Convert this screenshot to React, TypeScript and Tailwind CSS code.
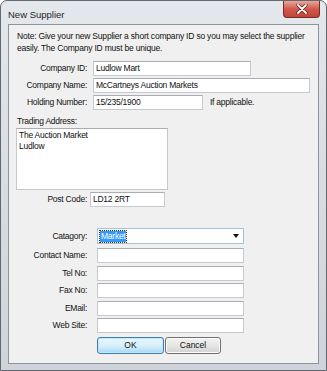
import React from 'react';

const font = "font-['Liberation_Sans',Arial,sans-serif]";

// Windows 7 style text box
const TextBox = ({ value, className }: { value?: string; className: string }) => (
  <div
    className={`h-[15px] bg-white border border-[#c5cad1] border-t-[#abadb3] flex items-center pl-[2px] text-[8.5px] tracking-[-0.25px] text-[#111] ${className}`}
  >
    {value}
  </div>
);

const Label = ({ text, className }: { text: string; className: string }) => (
  <div className={`text-right text-[8.5px] tracking-[-0.25px] text-[#111] leading-[15px] ${className}`}>{text}</div>
);

const App = () => {
  const contactFields = ['Contact Name:', 'Tel No:', 'Fax No:', 'EMail:', 'Web Site:'];

  return (
    <div className={`w-[327px] h-[371px] bg-white ${font}`}>
      <div className="w-[327px] h-[371px] rounded-t-[7px] border border-[#626870] bg-gradient-to-b from-[#e4e8ec] via-[#d9dde2] to-[#cfd4da] flex flex-col px-[7px] pb-[6px]">
        {/* Title bar */}
        <div className="h-[23px] flex items-start justify-between">
          <div className="text-[9.5px] text-[#1e1e1e] pt-[7px]">New Supplier</div>
          <div className="mr-[-1px] w-[37px] h-[17px] rounded-b-[4px] border border-t-0 border-[#7a2b25] bg-gradient-to-b from-[#e6a69a] via-[#cf5a4c] to-[#c2443a] flex items-center justify-center">
            <svg width="12" height="10" viewBox="0 0 12 10">
              <path d="M2 1 L10 9 M10 1 L2 9" stroke="#5a1a14" strokeWidth="3.2" strokeLinecap="round" />
              <path d="M2 1 L10 9 M10 1 L2 9" stroke="#ffffff" strokeWidth="1.8" strokeLinecap="round" />
            </svg>
          </div>
        </div>

        {/* Client area */}
        <div className="flex-1 bg-[#f0f0f0] border border-[#8e949c] flex flex-col">
          <div className="pl-[8px] pt-[5px] text-[8.5px] tracking-[-0.2px] leading-[12px] text-[#111]">
            <div>Note: Give your new Supplier a short company ID so you may select the supplier</div>
            <div>easily. The Company ID must be unique.</div>
          </div>

          <div className="mt-[7px] flex flex-col gap-[2px]">
            <div className="flex">
              <Label text="Company ID:" className="w-[78px]" />
              <TextBox value="Ludlow Mart" className="ml-[6px] w-[158px]" />
            </div>
            <div className="flex">
              <Label text="Company Name:" className="w-[78px]" />
              <TextBox value="McCartneys Auction Markets" className="ml-[6px] w-[217px]" />
            </div>
            <div className="flex items-center">
              <Label text="Holding Number:" className="w-[78px]" />
              <TextBox value="15/235/1900" className="ml-[6px] w-[110px]" />
              <div className="ml-[7px] text-[8.5px] tracking-[-0.25px] text-[#111]">If applicable.</div>
            </div>
          </div>

          <div className="mt-[5px] pl-[8px] text-[8.5px] tracking-[-0.25px] leading-[12px] text-[#111]">Trading Address:</div>
          <div className="ml-[7px] mt-[1px] w-[152px] h-[62px] bg-white border border-[#c5cad1] border-t-[#abadb3] pl-[2px] pt-[1px] text-[8.5px] tracking-[-0.25px] leading-[11px] text-[#111]">
            <div>The Auction Market</div>
            <div>Ludlow</div>
          </div>
          <div className="mt-[2px] flex">
            <Label text="Post Code:" className="w-[78px]" />
            <TextBox value="LD12 2RT" className="ml-[3px] w-[75px]" />
          </div>

          <div className="mt-[21px] flex">
            <Label text="Catagory:" className="w-[78px] leading-[16px]" />
            <div className="ml-[10px] w-[147px] h-[16px] bg-white border border-[#a6c3d8] flex items-center justify-between pl-[2px] pr-[4px]">
              <span className="bg-[#3399ff] text-white text-[8.5px] tracking-[-0.25px] leading-[11px] px-[1px] outline outline-1 outline-dotted outline-[#333]">
                Market
              </span>
              <svg width="6" height="4" viewBox="0 0 6 4">
                <path d="M0 0 H6 L3 4 Z" fill="#111" />
              </svg>
            </div>
          </div>

          <div className="mt-[4px] flex flex-col gap-[2.5px]">
            {contactFields.map((f) => (
              <div key={f} className="flex">
                <Label text={f} className="w-[78px]" />
                <TextBox className="ml-[10px] w-[147px]" />
              </div>
            ))}
          </div>

          <div className="mt-[4px] ml-[88px] flex gap-[1px]">
            <button className="w-[67px] h-[17px] rounded-[3px] border border-[#3c7fb1] bg-gradient-to-b from-[#eaf6fd] via-[#d9f0fc] to-[#a7d9f5] text-[8.5px] text-[#111] shadow-[inset_0_0_0_1px_#c3e7fb]">
              OK
            </button>
            <button className="w-[56px] h-[17px] rounded-[3px] border border-[#707070] bg-gradient-to-b from-[#f2f2f2] via-[#e6e6e6] to-[#d2d2d2] text-[8.5px] text-[#111] shadow-[inset_0_0_0_1px_#fcfcfc]">
              Cancel
            </button>
          </div>
        </div>
      </div>
    </div>
  );
};

export default App;
